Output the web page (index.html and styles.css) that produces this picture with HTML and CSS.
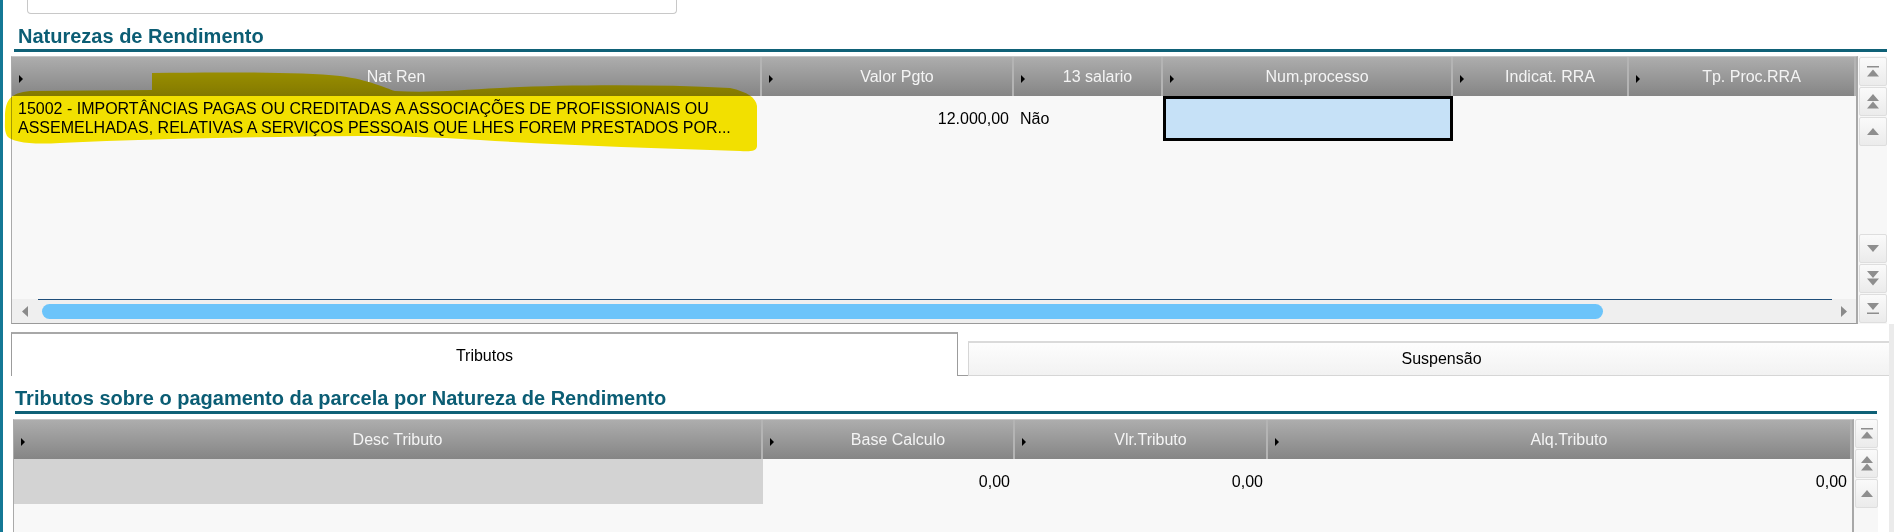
FILE: index.html
```html
<!DOCTYPE html>
<html lang="pt-BR">
<head>
  <meta charset="UTF-8">
  <meta name="viewport" content="width=device-width, initial-scale=1">
  <title>Naturezas de Rendimento</title>
  <link rel="stylesheet" href="styles.css">
</head>
<body>

  <div class="barra-lateral"></div>

  <div class="page">
    <!-- campo de cima (cortado) -->
    <div class="campo-topo"></div>

    <!-- Naturezas de Rendimento -->
    <h2 class="titulo titulo-nat">Naturezas de Rendimento</h2>

    <div class="grade grade-nat">
      <div class="grade-main">
        <div class="grade-header cols-nat">
          <div class="th"><span class="seta"></span><span class="rotulo">Nat Ren</span></div>
          <div class="th"><span class="seta"></span><span class="rotulo">Valor Pgto</span></div>
          <div class="th"><span class="seta"></span><span class="rotulo">13 salario</span></div>
          <div class="th"><span class="seta"></span><span class="rotulo">Num.processo</span></div>
          <div class="th"><span class="seta"></span><span class="rotulo">Indicat. RRA</span></div>
          <div class="th"><span class="seta"></span><span class="rotulo">Tp. Proc.RRA</span></div>
        </div>
        <div class="grade-body body-nat">
          <div class="grade-row cols-nat">
            <div class="td td-texto">15002 - IMPORTÂNCIAS PAGAS OU CREDITADAS A ASSOCIAÇÕES DE PROFISSIONAIS OU ASSEMELHADAS, RELATIVAS A SERVIÇOS PESSOAIS QUE LHES FOREM PRESTADOS POR...</div>
            <div class="td num">12.000,00</div>
            <div class="td">Não</div>
            <div class="td td-sel"></div>
            <div class="td"></div>
            <div class="td"></div>
          </div>
        </div>
        <div class="hscroll">
          <div class="hs-btn">
            <svg width="8" height="11" viewBox="0 0 8 11"><path d="M7 0 L7 11 L1 5.5 Z"/></svg>
          </div>
          <div class="hs-track"><div class="hs-thumb"></div></div>
          <div class="hs-btn hs-dir">
            <svg width="8" height="11" viewBox="0 0 8 11"><path d="M1 0 L1 11 L7 5.5 Z"/></svg>
          </div>
        </div>
      </div>
      <div class="vscroll">
        <div class="vs-grupo">
          <div class="vs-btn"><svg width="14" height="12" viewBox="0 0 14 12"><rect x="1" y="0" width="12" height="1.5"/><path d="M7 3.5 L13 10.5 L1 10.5 Z"/></svg></div>
          <div class="vs-btn"><svg width="14" height="15" viewBox="0 0 14 15"><path d="M7 0 L13 7 L1 7 Z M7 7.5 L13 14.5 L1 14.5 Z"/></svg></div>
          <div class="vs-btn"><svg width="14" height="8" viewBox="0 0 14 8"><path d="M7 0 L13 7 L1 7 Z"/></svg></div>
        </div>
        <div class="vs-grupo">
          <div class="vs-btn"><svg width="14" height="8" viewBox="0 0 14 8"><path d="M1 0 L13 0 L7 7 Z"/></svg></div>
          <div class="vs-btn"><svg width="14" height="15" viewBox="0 0 14 15"><path d="M1 0 L13 0 L7 7 Z M1 7.5 L13 7.5 L7 14.5 Z"/></svg></div>
          <div class="vs-btn"><svg width="14" height="12" viewBox="0 0 14 12"><path d="M1 0 L13 0 L7 7 Z"/><rect x="1" y="9.5" width="12" height="1.5"/></svg></div>
        </div>
      </div>
    </div>

    <div class="inferior">
      <div class="abas">
        <div class="aba ativa">Tributos</div>
        <div class="aba-sep"></div>
        <div class="aba">Suspensão</div>
      </div>

      <!-- Tributos -->
      <h2 class="titulo titulo-trib">Tributos sobre o pagamento da parcela por Natureza de Rendimento</h2>

      <div class="grade grade-trib">
        <div class="grade-main">
          <div class="grade-header cols-trib">
            <div class="th"><span class="seta"></span><span class="rotulo">Desc Tributo</span></div>
            <div class="th"><span class="seta"></span><span class="rotulo">Base Calculo</span></div>
            <div class="th"><span class="seta"></span><span class="rotulo">Vlr.Tributo</span></div>
            <div class="th"><span class="seta"></span><span class="rotulo">Alq.Tributo</span></div>
          </div>
          <div class="grade-body">
            <div class="grade-row cols-trib">
              <div class="td td-cinza"></div>
              <div class="td num">0,00</div>
              <div class="td num">0,00</div>
              <div class="td num">0,00</div>
            </div>
          </div>
        </div>
        <div class="vscroll">
          <div class="vs-grupo">
            <div class="vs-btn"><svg width="14" height="12" viewBox="0 0 14 12"><rect x="1" y="0" width="12" height="1.5"/><path d="M7 3.5 L13 10.5 L1 10.5 Z"/></svg></div>
            <div class="vs-btn"><svg width="14" height="15" viewBox="0 0 14 15"><path d="M7 0 L13 7 L1 7 Z M7 7.5 L13 14.5 L1 14.5 Z"/></svg></div>
            <div class="vs-btn"><svg width="14" height="8" viewBox="0 0 14 8"><path d="M7 0 L13 7 L1 7 Z"/></svg></div>
          </div>
        </div>
      </div>
    </div>
  </div>

  <!-- marca-texto amarelo por cima da linha -->
  <svg class="marca-texto" width="800" height="160" viewBox="0 0 800 160">
    <path d="M5 118 C5 100 10 93 30 91 L152 90 L152 73 C220 72 300 72 340 76 C370 80 385 88 395 91 C430 93 460 90 500 88 C560 85 650 84 730 88 C748 92 756 98 757 106 L757 146 C757 151 750 152 740 151 C650 148 560 145 480 140 C430 137 400 136 360 136 C250 137 150 139 60 143 C30 145 12 142 7 136 C4 130 5 124 5 118 Z"/>
  </svg>

</body>
</html>
```

FILE: styles.css
```css
* {
  box-sizing: border-box;
}
html, body {
  margin: 0;
}
body {
  font-family: 'Liberation Sans', Arial, sans-serif;
  font-size: 16px;
  color: #000;
  background: #fff;
  display: flex;
  height: 532px;
  overflow: hidden;
  position: relative;
}
.barra-lateral {
  width: 3px;
  flex-shrink: 0;
  background: #147895;
}
.page {
  flex: 1;
  min-width: 0;
  display: flex;
  flex-direction: column;
}
.campo-topo {
  margin-left: 24px;
  width: 650px;
  height: 14px;
  border: 1px solid #c8c8c8;
  border-top: none;
  border-radius: 0 0 4px 4px;
}
.titulo {
  margin: 0;
  font-size: 20px;
  line-height: 24px;
  font-weight: bold;
  color: #0b5d74;
  padding-bottom: 1px;
  border-bottom: 3px solid #0f6177;
}
.titulo-nat {
  margin: 10px 7px 0 11px;
  padding-left: 4px;
}
.titulo-trib {
  margin: 10px 12px 0 12px;
}

/* grades */
.grade {
  display: flex;
}
.grade-nat {
  margin: 4px 7px 0 8px;
}
.grade-trib {
  margin: 5px 11px 0 10px;
  flex: 1;
}
.grade-main {
  flex: 1;
  display: flex;
  flex-direction: column;
  border-top: 1px solid #c6c6c6;
  border-left: 1px solid #aaa;
  border-right: 2px solid #a8a8a8;
  border-bottom: 1px solid #9a9a9a;
}
.grade-trib .grade-main {
  border-bottom: none;
}
.cols-nat {
  display: grid;
  grid-template-columns: 750px 252px 149px 290px 176px 227px;
}
.cols-trib {
  display: grid;
  grid-template-columns: 749px 252px 253px 584px;
}
.grade-header {
  height: 39px;
  background: linear-gradient(#adadad, #858585);
}
.th {
  display: flex;
  align-items: center;
  border-right: 2px solid #b4b4b4;
  color: #f4f4f4;
  white-space: nowrap;
}
.th .seta {
  width: 0;
  height: 0;
  border-left: 4px solid #000;
  border-top: 4px solid transparent;
  border-bottom: 4px solid transparent;
  margin: 4px 9px 0 7px;
}
.th .rotulo {
  flex: 1;
  text-align: center;
}
.grade-body {
  background: #f8f8f8;
  flex: 1;
}
.body-nat {
  flex: none;
  height: 203px;
}
.grade-row {
  height: 45px;
}
.td {
  display: flex;
  align-items: center;
  padding: 0 6px;
  line-height: 19px;
  white-space: nowrap;
}
.td.num {
  justify-content: flex-end;
  padding-right: 5px;
}
.td-texto {
  display: block;
  padding: 3px 2px 0 6px;
  white-space: normal;
}
.td-sel {
  background: #c6e1f7;
  border: 3px solid #000;
}
.td-cinza {
  background: #d3d3d3;
}

/* barra de rolagem horizontal */
.hscroll {
  display: flex;
  height: 24px;
  background: #efefef;
}
.hs-btn {
  width: 26px;
  display: flex;
  align-items: center;
  justify-content: center;
  fill: #8a8a8a;
}
.hs-btn.hs-dir {
  width: 24px;
}
.hs-track {
  flex: 1;
  border-top: 1px solid #1f4e7a;
  padding: 4px 0 0 4px;
}
.hs-thumb {
  width: 1561px;
  height: 15px;
  border-radius: 8px;
  background: #6cc4fa;
}

/* botoes de rolagem vertical */
.vscroll {
  width: 29px;
  display: flex;
  flex-direction: column;
  justify-content: space-between;
  background: #f7f7f7;
  padding-top: 1px;
}
.grade-trib .vscroll {
  justify-content: flex-start;
  padding-top: 0;
}
.vs-btn {
  height: 29px;
  margin: 0 0 1px 1px;
  border: 1px solid #dedede;
  border-radius: 2px;
  background: linear-gradient(#fafafa, #ebebeb);
  display: flex;
  align-items: center;
  justify-content: center;
  fill: #8e8e8e;
}

/* abas */
.inferior {
  flex: 1;
  display: flex;
  flex-direction: column;
  overflow: hidden;
  border-right: 5px solid #ebebeb;
}
.abas {
  display: flex;
  align-items: flex-end;
  height: 44px;
  margin: 8px 0 0 8px;
}
.aba {
  flex-shrink: 0;
  width: 947px;
  height: 35px;
  display: flex;
  align-items: center;
  justify-content: center;
  border: 1px solid #d6d6d6;
  border-top: 2px solid #dadada;
  background: linear-gradient(#fdfdfd, #f2f2f2);
}
.aba.ativa {
  height: 44px;
  background: #fff;
  border: 1px solid #9c9c9c;
  border-top: 2px solid #a8a8a8;
  border-bottom: none;
  padding-top: 2px;
}
.aba-sep {
  width: 10px;
  flex-shrink: 0;
  border-bottom: 1px solid #9c9c9c;
}

.marca-texto {
  position: absolute;
  left: 0;
  top: 0;
  pointer-events: none;
  mix-blend-mode: multiply;
  fill: #f9e700;
}
```
